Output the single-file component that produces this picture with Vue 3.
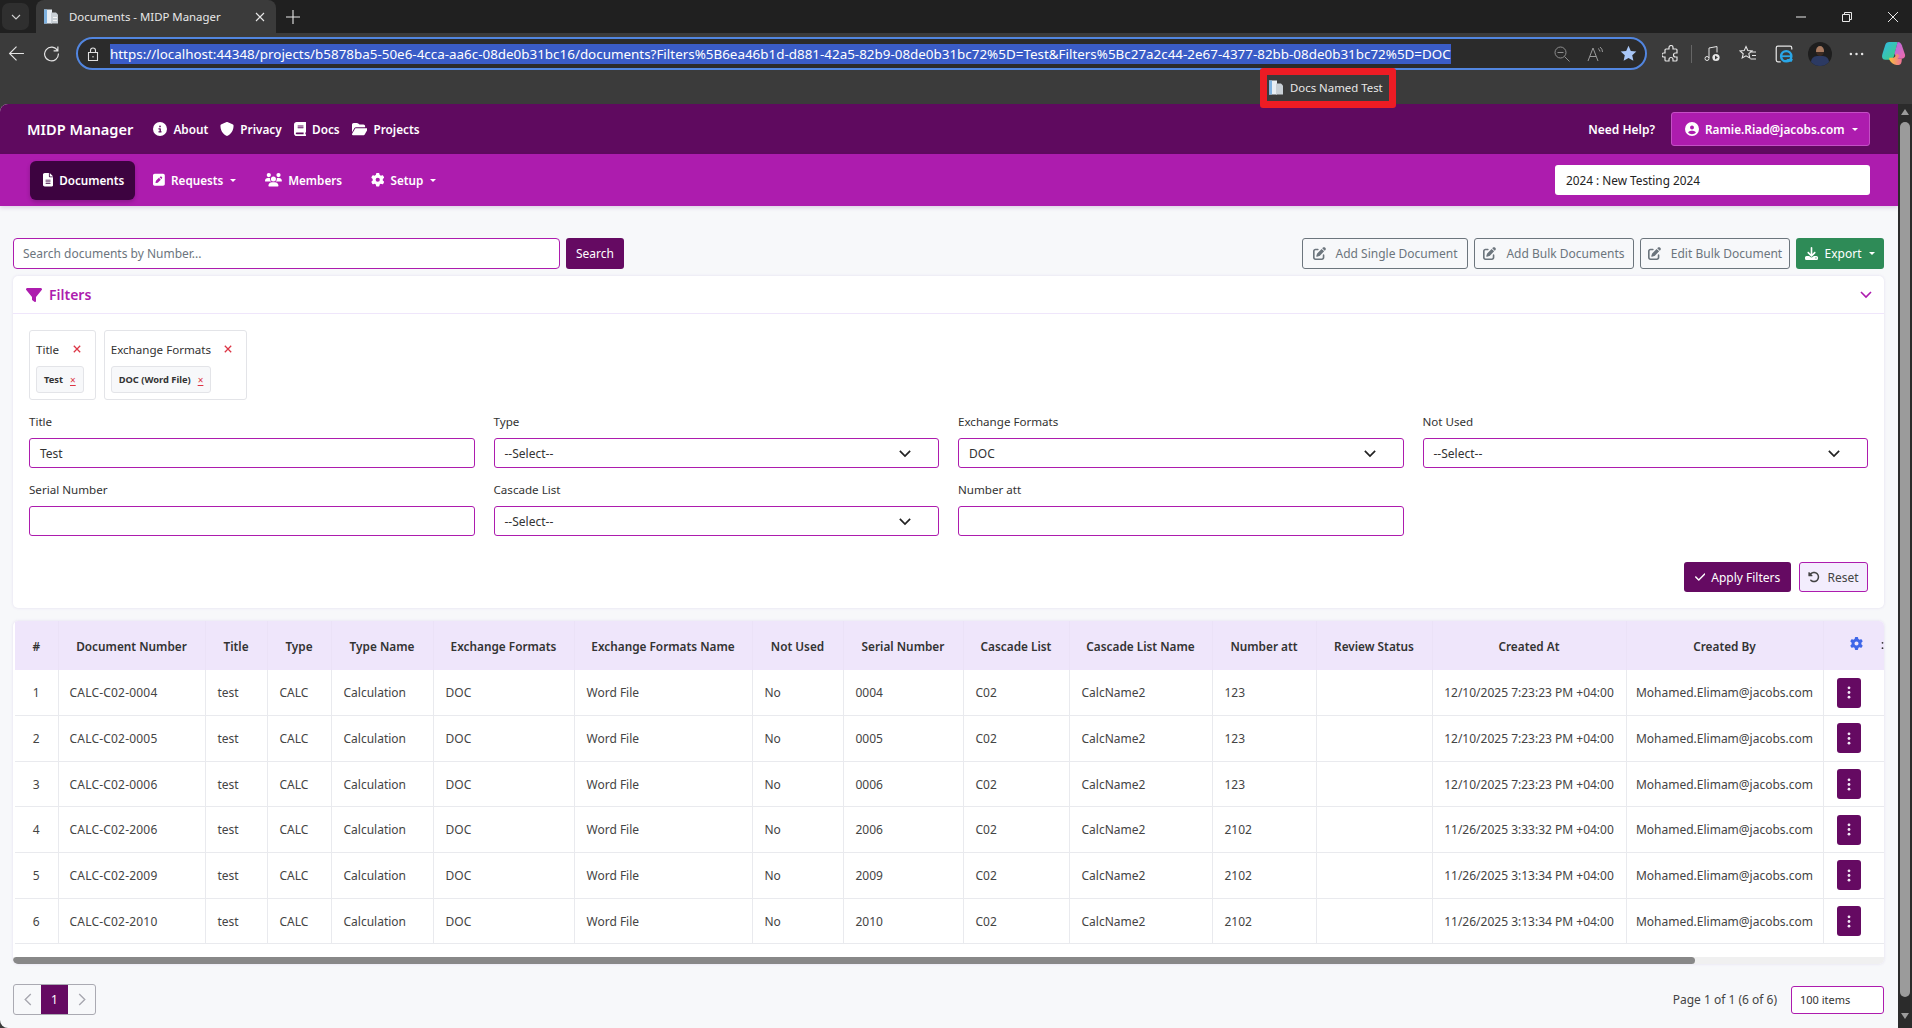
<script setup>
import { h } from 'vue'

const icons = {
  info: ['0 0 512 512', 'M256 512A256 256 0 1 0 256 0a256 256 0 1 0 0 512zM216 336h24V272H216c-13.3 0-24-10.7-24-24s10.7-24 24-24h48c13.3 0 24 10.7 24 24v88h8c13.3 0 24 10.7 24 24s-10.7 24-24 24H216c-13.3 0-24-10.7-24-24s10.7-24 24-24zm40-208a32 32 0 1 1 0 64 32 32 0 1 1 0-64z'],
  shield: ['0 0 512 512', 'M256 0c4.6 0 9.2 1 13.4 2.9L457.7 82.8c22 9.3 38.4 31 38.3 57.2c-.5 99.2-41.3 280.7-213.6 363.2c-16.7 8-36.1 8-52.8 0C57.3 420.7 16.5 239.2 16 140c-.1-26.2 16.3-47.9 38.3-57.2L242.7 2.9C246.8 1 251.4 0 256 0z'],
  book: ['0 0 448 512', 'M96 0C43 0 0 43 0 96V416c0 53 43 96 96 96H384h32c17.7 0 32-14.3 32-32s-14.3-32-32-32V384c17.7 0 32-14.3 32-32V32c0-17.7-14.3-32-32-32H384 96zm0 384H352v64H96c-17.7 0-32-14.3-32-32s14.3-32 32-32zm32-240c0-8.8 7.2-16 16-16H336c8.8 0 16 7.2 16 16s-7.2 16-16 16H144c-8.8 0-16-7.2-16-16zm16 48H336c8.8 0 16 7.2 16 16s-7.2 16-16 16H144c-8.8 0-16-7.2-16-16s7.2-16 16-16z'],
  folder: ['0 0 576 512', 'M88.7 223.8L0 375.8V96C0 60.7 28.7 32 64 32H181.5c17 0 33.3 6.7 45.3 18.7l26.5 26.5c12 12 28.3 18.7 45.3 18.7H416c35.3 0 64 28.7 64 64v32H144c-22.8 0-43.8 12.1-55.3 31.8zm27.6 16.1C122.1 230 132.6 224 144 224H544c11.5 0 22 6.1 27.7 16.1s5.7 22.2-.1 32.1l-112 192C453.9 474 443.4 480 432 480H32c-11.5 0-22-6.1-27.7-16.1s-5.7-22.2 .1-32.1l112-192z'],
  file: ['0 0 384 512', 'M64 0C28.7 0 0 28.7 0 64V448c0 35.3 28.7 64 64 64H320c35.3 0 64-28.7 64-64V160H256c-17.7 0-32-14.3-32-32V0H64zM256 0V128H384L256 0zM112 256H272c8.8 0 16 7.2 16 16s-7.2 16-16 16H112c-8.8 0-16-7.2-16-16s7.2-16 16-16zm0 64H272c8.8 0 16 7.2 16 16s-7.2 16-16 16H112c-8.8 0-16-7.2-16-16s7.2-16 16-16zm0 64H272c8.8 0 16 7.2 16 16s-7.2 16-16 16H112c-8.8 0-16-7.2-16-16s7.2-16 16-16z'],
  squarePen: ['0 0 448 512', 'M64 32C28.7 32 0 60.7 0 96V416c0 35.3 28.7 64 64 64H384c35.3 0 64-28.7 64-64V96c0-35.3-28.7-64-64-64H64zM325.8 139.7l14.4 14.4c15.6 15.6 15.6 40.9 0 56.6l-21.4 21.4-71-71 21.4-21.4c15.6-15.6 40.9-15.6 56.6 0zM119.9 289L225.1 183.8l71 71L190.9 359.9c-4.1 4.1-9.2 7-14.9 8.4l-60.1 15c-5.5 1.4-11.2-.2-15.2-4.2s-5.6-9.7-4.2-15.2l15-60.1c1.4-5.6 4.3-10.8 8.4-14.9z'],
  users: ['0 0 640 512', 'M144 0a80 80 0 1 1 0 160A80 80 0 1 1 144 0zM512 0a80 80 0 1 1 0 160A80 80 0 1 1 512 0zM0 298.7C0 239.8 47.8 192 106.7 192h42.7c15.9 0 31 3.5 44.6 9.7c-1.3 7.2-1.9 14.7-1.9 22.3c0 38.2 16.8 72.5 43.3 96c-.2 0-.4 0-.7 0H21.3C9.6 320 0 310.4 0 298.7zM405.3 320c-.2 0-.4 0-.7 0c26.6-23.5 43.3-57.8 43.3-96c0-7.6-.7-15-1.9-22.3c13.6-6.3 28.7-9.7 44.6-9.7h42.7C592.2 192 640 239.8 640 298.7c0 11.8-9.6 21.3-21.3 21.3H405.3zM224 224a96 96 0 1 1 192 0 96 96 0 1 1 -192 0zM128 485.3C128 411.7 187.7 352 261.3 352H378.7C452.3 352 512 411.7 512 485.3c0 14.7-11.9 26.7-26.7 26.7H154.7c-14.7 0-26.7-11.9-26.7-26.7z'],
  gear: ['0 0 512 512', 'M495.9 166.6c3.2 8.7 .5 18.4-6.4 24.6l-43.3 39.4c1.1 8.3 1.7 16.8 1.7 25.4s-.6 17.1-1.7 25.4l43.3 39.4c6.9 6.2 9.6 15.9 6.4 24.6c-4.4 11.9-9.7 23.3-15.8 34.3l-4.7 8.1c-6.6 11-14 21.4-22.1 31.2c-5.9 7.2-15.7 9.6-24.5 6.8l-55.7-17.7c-13.4 10.3-28.2 18.9-44 25.4l-12.5 57.1c-2 9.1-9 16.3-18.2 17.8c-13.8 2.3-28 3.5-42.5 3.5s-28.7-1.2-42.5-3.5c-9.2-1.5-16.2-8.7-18.2-17.8l-12.5-57.1c-15.8-6.5-30.6-15.1-44-25.4L83.1 425.9c-8.8 2.8-18.6 .3-24.5-6.8c-8.1-9.8-15.5-20.2-22.1-31.2l-4.7-8.1c-6.1-11-11.4-22.4-15.8-34.3c-3.2-8.7-.5-18.4 6.4-24.6l43.3-39.4C64.6 273.1 64 264.6 64 256s.6-17.1 1.7-25.4L22.4 191.2c-6.9-6.2-9.6-15.9-6.4-24.6c4.4-11.9 9.7-23.3 15.8-34.3l4.7-8.1c6.6-11 14-21.4 22.1-31.2c5.9-7.2 15.7-9.6 24.5-6.8l55.7 17.7c13.4-10.3 28.2-18.9 44-25.4l12.5-57.1c2-9.1 9-16.3 18.2-17.8C227.3 1.2 241.5 0 256 0s28.7 1.2 42.5 3.5c9.2 1.5 16.2 8.7 18.2 17.8l12.5 57.1c15.8 6.5 30.6 15.1 44 25.4l55.7-17.7c8.8-2.8 18.6-.3 24.5 6.8c8.1 9.8 15.5 20.2 22.1 31.2l4.7 8.1c6.1 11 11.4 22.4 15.8 34.3zM256 336a80 80 0 1 0 0-160 80 80 0 1 0 0 160z'],
  filter: ['0 0 512 512', 'M3.9 54.9C10.5 40.9 24.5 32 40 32H472c15.5 0 29.5 8.9 36.1 22.9s4.6 30.5-5.2 42.5L320 320.9V448c0 12.1-6.8 23.2-17.7 28.6s-23.8 4.3-33.5-3l-64-48c-8.1-6-12.8-15.5-12.8-25.6V320.9L9 97.3C-.7 85.4-2.8 68.8 3.9 54.9z'],
  user: ['0 0 512 512', 'M399 384.2C376.9 345.8 335.4 320 288 320H224c-47.4 0-88.9 25.8-111 64.2c35.2 39.2 86.2 63.8 143 63.8s107.8-24.7 143-63.8zM0 256a256 256 0 1 1 512 0A256 256 0 1 1 0 256zm256 16a72 72 0 1 0 0-144 72 72 0 1 0 0 144z'],
  edit: ['0 0 512 512', 'M471.6 21.7c-21.9-21.9-57.3-21.9-79.2 0L362.3 51.7l97.9 97.9 30.1-30.1c21.9-21.9 21.9-57.3 0-79.2L471.6 21.7zm-299.2 220c-6.1 6.1-10.8 13.6-13.5 21.9l-29.6 88.8c-2.9 8.6-.6 18.1 5.8 24.6s15.9 8.7 24.6 5.8l88.8-29.6c8.2-2.7 15.7-7.4 21.9-13.5L437.7 172.3 339.7 74.3 172.4 241.7zM96 64C43 64 0 107 0 160V416c0 53 43 96 96 96H352c53 0 96-43 96-96V320c0-17.7-14.3-32-32-32s-32 14.3-32 32v96c0 17.7-14.3 32-32 32H96c-17.7 0-32-14.3-32-32V160c0-17.7 14.3-32 32-32h96c17.7 0 32-14.3 32-32s-14.3-32-32-32H96z'],
  download: ['0 0 512 512', 'M288 32c0-17.7-14.3-32-32-32s-32 14.3-32 32V274.7l-73.4-73.4c-12.5-12.5-32.8-12.5-45.3 0s-12.5 32.8 0 45.3l128 128c12.5 12.5 32.8 12.5 45.3 0l128-128c12.5-12.5 12.5-32.8 0-45.3s-32.8-12.5-45.3 0L288 274.7V32zM64 352c-35.3 0-64 28.7-64 64v32c0 35.3 28.7 64 64 64H448c35.3 0 64-28.7 64-64V416c0-35.3-28.7-64-64-64H346.5l-45.3 45.3c-25 25-65.5 25-90.5 0L165.5 352H64zm368 56a24 24 0 1 1 0 48 24 24 0 1 1 0-48z'],
  check: ['0 0 448 512', 'M438.6 105.4c12.5 12.5 12.5 32.8 0 45.3l-256 256c-12.5 12.5-32.8 12.5-45.3 0l-128-128c-12.5-12.5-12.5-32.8 0-45.3s32.8-12.5 45.3 0L160 338.7 393.4 105.4c12.5-12.5 32.8-12.5 45.3 0z'],
  reset: ['0 0 512 512', 'M48.5 224H40c-13.3 0-24-10.7-24-24V72c0-9.7 5.8-18.5 14.8-22.2s19.3-1.7 26.2 5.2L98.6 96.6c87.6-86.5 228.7-86.2 315.8 1c87.5 87.5 87.5 229.3 0 316.8s-229.3 87.5-316.8 0c-12.5-12.5-12.5-32.8 0-45.3s32.8-12.5 45.3 0c62.5 62.5 163.8 62.5 226.3 0s62.5-163.8 0-226.3c-62.2-62.2-162.7-62.5-225.3-1L185 183c6.9 6.9 8.9 17.2 5.2 26.2s-12.5 14.8-22.2 14.8H48.5z']
}

// width follows the glyph's own viewBox, height is 1em
const Fa = (props) => {
  const [box, d] = icons[props.name]
  const w = Number(box.split(' ')[2])
  return h('svg', { viewBox: box, fill: 'currentColor', class: 'fa', style: { width: w / 512 + 'em' } }, [h('path', { d })])
}
Fa.props = ['name']

const url =
  'https://localhost:44348/projects/b5878ba5-50e6-4cca-aa6c-08de0b31bc16/documents?Filters%5B6ea46b1d-d881-42a5-82b9-08de0b31bc72%5D=Test&Filters%5Bc27a2c44-2e67-4377-82bb-08de0b31bc72%5D=DOC'

const columns = [
  { label: '#', width: 43 },
  { label: 'Document Number', width: 147 },
  { label: 'Title', width: 62 },
  { label: 'Type', width: 64 },
  { label: 'Type Name', width: 102 },
  { label: 'Exchange Formats', width: 141 },
  { label: 'Exchange Formats Name', width: 178 },
  { label: 'Not Used', width: 91 },
  { label: 'Serial Number', width: 120 },
  { label: 'Cascade List', width: 106 },
  { label: 'Cascade List Name', width: 143 },
  { label: 'Number att', width: 104 },
  { label: 'Review Status', width: 116 },
  { label: 'Created At', width: 194 },
  { label: 'Created By', width: 197 },
  { label: '', width: 61 }
]

const rows = [
  ['CALC-C02-0004', '0004', '123', '12/10/2025 7:23:23 PM +04:00'],
  ['CALC-C02-0005', '0005', '123', '12/10/2025 7:23:23 PM +04:00'],
  ['CALC-C02-0006', '0006', '123', '12/10/2025 7:23:23 PM +04:00'],
  ['CALC-C02-2006', '2006', '2102', '11/26/2025 3:33:32 PM +04:00'],
  ['CALC-C02-2009', '2009', '2102', '11/26/2025 3:13:34 PM +04:00'],
  ['CALC-C02-2010', '2010', '2102', '11/26/2025 3:13:34 PM +04:00']
]

const filterRows = [
  [
    { label: 'Title', value: 'Test' },
    { label: 'Type', value: '--Select--', select: true },
    { label: 'Exchange Formats', value: 'DOC', select: true },
    { label: 'Not Used', value: '--Select--', select: true }
  ],
  [
    { label: 'Serial Number', value: '' },
    { label: 'Cascade List', value: '--Select--', select: true },
    { label: 'Number att', value: '' }
  ]
]

const chips = [
  { label: 'Title', value: 'Test' },
  { label: 'Exchange Formats', value: 'DOC (Word File)' }
]
</script>

<template>
  <div class="window">
    <div class="tabstrip">
      <div class="tab-menu">
        <svg viewBox="0 0 12 12" width="12" height="12"><path d="M2 4l4 4 4-4" fill="none" stroke="#d0d0d0" stroke-width="1.1" /></svg>
      </div>
      <div class="tab">
        <svg class="favicon" viewBox="0 0 16 16">
          <path d="M1 1h8v14H1z" fill="#e8eef4" />
          <path d="M1 1h3v14H1z" fill="#7fb2e0" />
          <path d="M8 4h5l2 2v9H8z" fill="#c9d0d6" />
          <path d="M10 9h4M10 12h4" stroke="#f5f5f5" stroke-width="1" />
        </svg>
        <span class="tab-title">Documents - MIDP Manager</span>
        <svg class="tab-close" viewBox="0 0 10 10" width="10" height="10"><path d="M1 1l8 8M9 1l-8 8" stroke="#e8e8e8" stroke-width="1.1" /></svg>
      </div>
      <svg class="new-tab" viewBox="0 0 14 14" width="14" height="14"><path d="M7 0v14M0 7h14" stroke="#e8e8e8" stroke-width="1.1" /></svg>
      <div class="window-controls">
        <svg viewBox="0 0 10 10" width="10" height="10"><path d="M0 5h10" stroke="#e8e8e8" /></svg>
        <svg viewBox="0 0 10 10" width="10" height="10"><path d="M.5 2.5h7v7h-7zM2.5 2.5V.5h7v7h-2" fill="none" stroke="#e8e8e8" /></svg>
        <svg viewBox="0 0 10 10" width="10" height="10"><path d="M0 0l10 10M10 0L0 10" stroke="#e8e8e8" /></svg>
      </div>
    </div>

    <div class="toolbar">
      <div class="nav-icon">
        <svg viewBox="0 0 16 16" width="17" height="17"><path d="M15 8H1.5M8 1.5L1.5 8 8 14.5" fill="none" stroke="#e6e6e6" stroke-width="1.1" /></svg>
      </div>
      <div class="nav-icon">
        <svg viewBox="0 0 16 16" width="17" height="17"><path d="M13.8 5.5A6.5 6.5 0 1 0 14.5 8M14 1.5v4h-4" fill="none" stroke="#e6e6e6" stroke-width="1.1" /></svg>
      </div>
      <div class="omnibox">
        <svg class="lock" viewBox="0 0 14 14" width="14" height="14"><path d="M2.5 5.5h9v8h-9zM4.5 5.5V3.5a2.5 2.5 0 0 1 5 0v2M7 9v1.5" fill="none" stroke="#e0e0e0" stroke-width="1.1" /></svg>
        <span class="url">{{ url }}</span>
        <svg class="omni-icon first" viewBox="0 0 16 16" width="16" height="16"><path d="M6.5 1a5.5 5.5 0 1 0 0 11 5.5 5.5 0 0 0 0-11zM3.5 6.5h6M10.5 10.5l5 5" fill="none" stroke="#8e8e8e" /></svg>
        <svg class="omni-icon" viewBox="0 0 16 16" width="16" height="16"><path d="M1 15L6 2l5 13M3 10.5h6M11 2.5a4 4 0 0 1 2 3M13 1a6 6 0 0 1 2.5 5" fill="none" stroke="#9a9a9a" /></svg>
        <svg class="omni-icon" viewBox="0 0 16 16" width="17" height="17"><path d="M8 .8l2.2 4.8 5.2.6-3.9 3.5 1.1 5.2L8 12.3l-4.6 2.6 1.1-5.2L.6 6.2l5.2-.6z" fill="#a9c7f7" /></svg>
      </div>
      <div class="tool"><svg viewBox="0 0 18 18" width="18" height="18"><path d="M7 2.5a2 2 0 0 1 4 0V4h3a1 1 0 0 1 1 1v3h-1.5a2 2 0 0 0 0 4H15v3a1 1 0 0 1-1 1h-3v-1.5a2 2 0 0 0-4 0V16H4a1 1 0 0 1-1-1v-3H1.8a2 2 0 0 1 0-4H3V5a1 1 0 0 1 1-1h3z" fill="none" stroke="#e6e6e6" stroke-width="1.2" /></svg></div>
      <div class="tool-divider"></div>
      <div class="tool"><svg viewBox="0 0 18 18" width="18" height="18"><path d="M6 13V3l8-1.5v6" fill="none" stroke="#e6e6e6" /><circle cx="4" cy="13.5" r="2" fill="none" stroke="#e6e6e6" /><circle cx="13" cy="12.5" r="3.6" fill="#e6e6e6" /><path d="M12 10.5l3 2-3 2z" fill="#3b3b3b" /></svg></div>
      <div class="tool"><svg viewBox="0 0 18 18" width="18" height="18"><path d="M7 1.5l1.8 4 4.2.4-3.2 2.8 1 4.2L7 10.8 3.2 13l1-4.2L1 6l4.2-.4zM11 7h6M13 10.5h4M11.5 14H17" fill="none" stroke="#e6e6e6" stroke-width="1.1" /></svg></div>
      <div class="tool"><svg viewBox="0 0 18 18" width="20" height="20"><path d="M6 16H3.5A1.5 1.5 0 0 1 2 14.5v-11A1.5 1.5 0 0 1 3.5 2h11A1.5 1.5 0 0 1 16 3.5V5" fill="none" stroke="#e6e6e6" stroke-width="1.1" /><circle cx="11" cy="11" r="4.6" fill="none" stroke="#2aa7e8" stroke-width="2.2" /><path d="M6.5 11h9" stroke="#2aa7e8" stroke-width="1.6" /><path d="M12 13.5h5l-1 2.5H9z" fill="#2aa7e8" /></svg></div>
      <div class="tool"><span class="avatar"><span class="avatar-body"></span><span class="avatar-head"></span></span></div>
      <div class="tool"><svg viewBox="0 0 16 4" width="15" height="4"><circle cx="2" cy="2" r="1.3" fill="#e6e6e6" /><circle cx="8" cy="2" r="1.3" fill="#e6e6e6" /><circle cx="14" cy="2" r="1.3" fill="#e6e6e6" /></svg></div>
      <div class="tool copilot-slot">
        <svg viewBox="0 0 24 24" width="25" height="25">
          <defs>
            <linearGradient id="cop-a" x1="0" y1="0" x2="1" y2="1"><stop offset="0" stop-color="#31b8e8" /><stop offset="1" stop-color="#3fd07a" /></linearGradient>
            <linearGradient id="cop-b" x1="0" y1="0" x2="1" y2="1"><stop offset="0" stop-color="#b06ae8" /><stop offset="1" stop-color="#f06aa8" /></linearGradient>
            <linearGradient id="cop-c" x1="0" y1="0" x2="1" y2="0"><stop offset="0" stop-color="#f7c23a" /><stop offset="1" stop-color="#f0709a" /></linearGradient>
          </defs>
          <path d="M8 1h8l-3 12c-1 3-2 5-5 5H4C1 18 .5 15 1.5 12L4 4c.6-2 2-3 4-3z" fill="url(#cop-a)" />
          <path d="M16 1c2 0 3 1 4 3l3 9c.6 2-.5 4-3 4h-5l-2-5z" fill="url(#cop-b)" />
          <path d="M8 18h6c2 0 3-2 4-4l-3-2c-1 3-2 4-3.5 4H8z M8 18c2 3 4 5 7 5h2c2 0 3-2 3-6h-5c-2 0-3 1-7 1z" fill="url(#cop-c)" />
        </svg>
      </div>
    </div>

    <div class="bookmarks">
      <div class="bookmark">
        <svg class="favicon" viewBox="0 0 16 16">
          <path d="M1 1h8v14H1z" fill="#e8eef4" />
          <path d="M1 1h3v14H1z" fill="#7fb2e0" />
          <path d="M8 4h5l2 2v9H8z" fill="#c9d0d6" />
        </svg>
        <span>Docs Named Test</span>
      </div>
    </div>

    <div class="viewport">
      <div class="page">
        <header class="topnav">
          <span class="brand">MIDP Manager</span>
          <a class="topnav-link"><Fa name="info" />About</a>
          <a class="topnav-link"><Fa name="shield" />Privacy</a>
          <a class="topnav-link"><Fa name="book" />Docs</a>
          <a class="topnav-link"><Fa name="folder" />Projects</a>
          <span class="need-help">Need Help?</span>
          <button class="user-btn"><Fa name="user" />Ramie.Riad@jacobs.com<i class="caret"></i></button>
        </header>

        <nav class="subnav">
          <a class="subnav-link active"><Fa name="file" />Documents</a>
          <a class="subnav-link"><Fa name="squarePen" />Requests<i class="caret"></i></a>
          <a class="subnav-link"><Fa name="users" />Members</a>
          <a class="subnav-link"><Fa name="gear" />Setup<i class="caret"></i></a>
          <div class="project-select">2024 : New Testing 2024</div>
        </nav>

        <main class="content">
          <div class="actions">
            <input class="search-input" placeholder="Search documents by Number..." />
            <button class="btn btn-dark search-btn">Search</button>
            <span class="spacer"></span>
            <button class="btn btn-outline add-single"><Fa name="edit" />Add Single Document</button>
            <button class="btn btn-outline add-bulk"><Fa name="edit" />Add Bulk Documents</button>
            <button class="btn btn-outline edit-bulk"><Fa name="edit" />Edit Bulk Document</button>
            <button class="btn btn-green"><Fa name="download" />Export<i class="caret"></i></button>
          </div>

          <section class="filters">
            <div class="filters-head">
              <Fa name="filter" />
              <span>Filters</span>
              <svg class="head-chevron" viewBox="0 0 12 8" width="12" height="8"><path d="M1 1l5 5 5-5" fill="none" stroke="#ad1cae" stroke-width="1.6" /></svg>
            </div>
            <div class="filters-body">
              <div class="chips">
                <div v-for="chip in chips" :key="chip.label" class="chip-group">
                  <div class="chip-title">
                    <span>{{ chip.label }}</span>
                    <svg viewBox="0 0 10 10" width="8" height="8"><path d="M1 1l8 8M9 1l-8 8" stroke="#dc3545" stroke-width="1.6" /></svg>
                  </div>
                  <div class="chip-value">
                    {{ chip.value }}
                    <span class="chip-x">×</span>
                  </div>
                </div>
              </div>
              <div v-for="(row, i) in filterRows" :key="i" class="field-row">
                <div v-for="field in row" :key="field.label" class="field">
                  <label>{{ field.label }}</label>
                  <div class="control">
                    <span>{{ field.value }}</span>
                    <svg v-if="field.select" viewBox="0 0 14 10" width="12" height="9"><path d="M1 2l6 6 6-6" fill="none" stroke="#222" stroke-width="2" /></svg>
                  </div>
                </div>
              </div>
              <div class="filter-actions">
                <button class="btn btn-dark apply-btn"><Fa name="check" />Apply Filters</button>
                <button class="btn reset-btn"><Fa name="reset" />Reset</button>
              </div>
            </div>
          </section>

          <section class="table-card">
            <table class="docs">
              <colgroup>
                <col v-for="col in columns" :key="col.label" :style="{ width: col.width + 'px' }" />
              </colgroup>
              <thead>
                <tr>
                  <th v-for="col in columns.slice(0, -1)" :key="col.label">{{ col.label }}</th>
                  <th class="th-actions">
                    <div class="th-actions-inner">
                      <Fa name="gear" />
                      <svg viewBox="0 0 3 10" width="3" height="9"><circle cx="1.5" cy="2" r="1" fill="#333" /><circle cx="1.5" cy="8" r="1" fill="#333" /></svg>
                    </div>
                  </th>
                </tr>
              </thead>
              <tbody>
                <tr v-for="(row, i) in rows" :key="row[0]">
                  <td class="num">{{ i + 1 }}</td>
                  <td class="doc-number">{{ row[0] }}</td>
                  <td>test</td>
                  <td>CALC</td>
                  <td>Calculation</td>
                  <td>DOC</td>
                  <td>Word File</td>
                  <td>No</td>
                  <td>{{ row[1] }}</td>
                  <td>C02</td>
                  <td>CalcName2</td>
                  <td>{{ row[2] }}</td>
                  <td></td>
                  <td class="center">{{ row[3] }}</td>
                  <td class="center">Mohamed.Elimam@jacobs.com</td>
                  <td class="td-actions">
                    <button class="kebab">
                      <svg viewBox="0 0 4 14" width="4" height="13"><circle cx="2" cy="2" r="1.5" /><circle cx="2" cy="7" r="1.5" /><circle cx="2" cy="12" r="1.5" /></svg>
                    </button>
                  </td>
                </tr>
              </tbody>
            </table>
            <div class="h-scroll"><div class="h-thumb"></div></div>
          </section>

          <footer class="pager-row">
            <div class="pager">
              <span class="pager-btn">
                <svg viewBox="0 0 8 14" width="8" height="13"><path d="M7 1L1 7l6 6" fill="none" stroke="#a8a8b0" stroke-width="1.5" /></svg>
              </span>
              <span class="pager-btn current">1</span>
              <span class="pager-btn">
                <svg viewBox="0 0 8 14" width="8" height="13"><path d="M1 1l6 6-6 6" fill="none" stroke="#a8a8b0" stroke-width="1.5" /></svg>
              </span>
            </div>
            <span class="spacer"></span>
            <span class="page-info">Page 1 of 1 (6 of 6)</span>
            <div class="page-size">100 items</div>
          </footer>
        </main>
      </div>

      <div class="v-scroll">
        <i class="arrow-up"></i>
        <div class="v-thumb"></div>
        <i class="arrow-down"></i>
      </div>
    </div>

    <div class="annotation"></div>
  </div>
</template>

<style>
html,
body {
  margin: 0;
  overflow: hidden;
  background: #3b3b3b;
}
</style>

<style scoped>
.window {
  position: relative;
  width: 1912px;
  height: 1028px;
  display: flex;
  flex-direction: column;
  overflow: hidden;
  background: #3b3b3b;
  font-family: 'Noto Sans', 'Open Sans', sans-serif;
  font-size: 12px;
  color: #333;
}

.fa {
  height: 1em;
  flex: none;
}

/* browser chrome */
.tabstrip {
  height: 33px;
  flex: none;
  display: flex;
  align-items: center;
  background: #202020;
}

.tab-menu {
  width: 27px;
  height: 27px;
  margin-left: 2px;
  border-radius: 7px;
  background: #2f2f2f;
  display: flex;
  align-items: center;
  justify-content: center;
}

.tab {
  width: 240px;
  height: 33px;
  margin-left: 7px;
  padding-left: 7px;
  box-sizing: border-box;
  border-radius: 8px 8px 0 0;
  background: #3b3b3b;
  display: flex;
  align-items: center;
  color: #e8e8e8;
  font-size: 11.4px;
}

.favicon {
  width: 16px;
  height: 17px;
  flex: none;
}

.tab-title {
  margin-left: 10px;
  white-space: nowrap;
}

.tab-close {
  margin-left: auto;
  margin-right: 11px;
}

.new-tab {
  margin-left: 10px;
}

.window-controls {
  margin-left: auto;
  display: flex;
  align-items: center;
  gap: 36px;
  margin-right: 14px;
}

.toolbar {
  height: 37px;
  flex: none;
  box-sizing: border-box;
  padding-top: 4px;
  display: flex;
  align-items: center;
}

.nav-icon {
  width: 32px;
  margin-right: 3px;
  display: flex;
  justify-content: center;
}

.omnibox {
  width: 1571px;
  height: 33px;
  margin-left: 6px;
  margin-right: 6px;
  box-sizing: border-box;
  border: 2px solid #5286e0;
  border-radius: 17px;
  background: #2b2b2b;
  display: flex;
  align-items: center;
  padding-left: 8px;
  padding-right: 8px;
  color: #fff;
}

.lock {
  flex: none;
}

.url {
  margin-left: 10px;
  background: #3a5cc7;
  color: #fff;
  white-space: nowrap;
  font-size: 13.42px;
  line-height: 20px;
}

.omni-icon {
  flex: none;
  margin-left: 17px;
}

.omni-icon.first {
  margin-left: auto;
}

.tool {
  width: 36px;
  display: flex;
  justify-content: center;
  align-items: center;
}

.tool-divider {
  width: 1px;
  height: 18px;
  background: #666;
  margin: 0 2px;
}

.copilot-slot {
  margin-left: 1px;
}

.avatar {
  width: 24px;
  height: 24px;
  border-radius: 50%;
  background: #1e1e1e;
  overflow: hidden;
  position: relative;
  display: block;
}

.avatar-head {
  position: absolute;
  left: 8px;
  top: 4px;
  width: 8px;
  height: 10px;
  border-radius: 50%;
  background: linear-gradient(#a87a60 60%, #3a2a22 60%);
}

.avatar-body {
  position: absolute;
  left: 3px;
  top: 14px;
  width: 18px;
  height: 12px;
  border-radius: 6px 6px 0 0;
  background: #2c3a63;
}

.bookmarks {
  height: 34px;
  flex: none;
  position: relative;
  display: flex;
  align-items: center;
  padding-left: 1268px;
}

.bookmark {
  display: flex;
  align-items: center;
  gap: 6px;
  color: #e8e8e8;
  font-size: 11.4px;
  position: relative;
  z-index: 3;
}

.annotation {
  position: absolute;
  left: 1260px;
  top: 68px;
  width: 136px;
  height: 40px;
  box-sizing: border-box;
  border: 7px solid #ed1c24;
  border-radius: 3px;
  z-index: 2;
}

.viewport {
  flex: 1;
  min-height: 0;
  display: flex;
}

.page {
  flex: 1;
  min-width: 0;
  display: flex;
  flex-direction: column;
  background: #f7f8fa;
  border-radius: 8px 0 0 8px;
  overflow: hidden;
}

.v-scroll {
  width: 14px;
  flex: none;
  background: #2b2b2b;
  display: flex;
  flex-direction: column;
  align-items: center;
  padding-top: 5px;
  box-sizing: border-box;
}

.arrow-up {
  width: 0;
  height: 0;
  border-left: 4px solid transparent;
  border-right: 4px solid transparent;
  border-bottom: 6px solid #9b9b9b;
}

.arrow-down {
  width: 0;
  height: 0;
  margin-top: 16px;
  border-left: 4px solid transparent;
  border-right: 4px solid transparent;
  border-top: 6px solid #9b9b9b;
}

.v-thumb {
  width: 10px;
  height: 875px;
  margin-top: 7px;
  border-radius: 5px;
  background: #9b9b9b;
}

/* app nav */
.topnav {
  height: 50px;
  flex: none;
  padding: 0 28px 0 27px;
  display: flex;
  align-items: center;
  background: #5f0a5f;
  color: #fff;
}

.brand {
  font-size: 14.6px;
  font-weight: 600;
  margin-right: 20px;
}

.topnav-link {
  display: flex;
  align-items: center;
  gap: 6px;
  font-weight: 600;
  font-size: 11.8px;
  margin-right: 12px;
}

.topnav-link .fa {
  font-size: 14px;
}

.need-help {
  margin-left: auto;
  font-weight: 600;
  font-size: 12px;
}

.user-btn {
  width: 199px;
  height: 34px;
  margin-left: 16px;
  padding: 0 0 0 13px;
  box-sizing: border-box;
  border: 1px solid #c44fc5;
  border-radius: 3px;
  background: #ad1cae;
  color: #fff;
  font: 600 11.8px 'Noto Sans', sans-serif;
  display: flex;
  align-items: center;
  gap: 6px;
}

.user-btn .fa {
  font-size: 14px;
}

.caret {
  width: 0;
  height: 0;
  margin-left: 1px;
  border-left: 3px solid transparent;
  border-right: 3px solid transparent;
  border-top: 3px solid currentColor;
}

.subnav {
  height: 52px;
  flex: none;
  box-sizing: border-box;
  padding: 0 28px 0 30px;
  display: flex;
  align-items: center;
  background: #ad1cae;
  color: #fff;
  box-shadow: 0 2px 4px rgba(80, 0, 120, 0.15);
  position: relative;
}

.subnav-link {
  height: 39px;
  padding: 0 13px;
  margin-right: 3px;
  border-radius: 6px;
  display: flex;
  align-items: center;
  gap: 6px;
  font-weight: 600;
  font-size: 11.7px;
}

.subnav-link.active {
  padding-right: 11px;
  margin-right: 5px;
  background: #3d0340;
  box-shadow: 0 2px 4px rgba(0, 0, 0, 0.2);
}

.subnav-link .fa {
  font-size: 13.5px;
}

.project-select {
  width: 315px;
  height: 30px;
  margin-left: auto;
  padding-left: 11px;
  box-sizing: border-box;
  border-radius: 3px;
  background: #fff;
  color: #222;
  font-size: 11.8px;
  line-height: 30px;
}

/* main */
.content {
  flex: 1;
  min-height: 0;
  padding: 32px 14px 0 13px;
  display: flex;
  flex-direction: column;
}

.actions {
  display: flex;
  align-items: stretch;
  height: 31px;
  margin-bottom: 7px;
}

.search-input {
  width: 547px;
  box-sizing: border-box;
  border: 1px solid #ad1cae;
  border-radius: 4px;
  padding: 0 9px;
  font: 12px 'Noto Sans', sans-serif;
  background: #fff;
  outline: none;
}

.search-input::placeholder {
  color: #6c757d;
  opacity: 1;
}

.btn {
  height: 31px;
  box-sizing: border-box;
  border-radius: 3px;
  border: 1px solid transparent;
  font: 12px 'Noto Sans', sans-serif;
  display: flex;
  align-items: center;
  justify-content: center;
  gap: 7px;
  padding: 0;
}

.search-btn {
  width: 58px;
  margin-left: 6px;
}

.btn-dark {
  background: #650a62;
  color: #fff;
}

.spacer {
  flex: 1;
}

.btn-outline {
  background: transparent;
  border-color: #6c757d;
  color: #6c757d;
  margin-right: 6px;
}

.btn-outline .fa {
  font-size: 13px;
  margin-right: 3px;
}

.add-single {
  width: 166px;
}

.add-bulk {
  width: 160px;
}

.edit-bulk {
  width: 150px;
}

.btn-green {
  width: 88px;
  background: #2e8b57;
  color: #fff;
}

.btn-green .fa {
  font-size: 13px;
}

.filters {
  height: 332px;
  flex: none;
  box-sizing: border-box;
  background: #fff;
  border-radius: 5px;
  box-shadow: 0 0 3px rgba(120, 80, 180, 0.16);
  display: flex;
  flex-direction: column;
}

.filters-head {
  height: 38px;
  flex: none;
  box-sizing: border-box;
  border-bottom: 1px solid #efe6fb;
  padding-left: 13px;
  padding-right: 12px;
  display: flex;
  align-items: center;
  gap: 7px;
  color: #ad1cae;
  font-size: 14px;
  font-weight: 600;
}

.filters-head .fa {
  font-size: 16px;
}

.head-chevron {
  margin-left: auto;
}

.filters-body {
  padding: 16px 16px 0;
}

.chips {
  display: flex;
  gap: 8px;
}

.chip-group {
  height: 70px;
  box-sizing: border-box;
  border: 1px solid #e3e4e8;
  border-radius: 3px;
  padding: 0 14px 0 6px;
}

.chip-title {
  height: 35px;
  padding-top: 1px;
  box-sizing: border-box;
  display: flex;
  align-items: center;
  gap: 13px;
  font-size: 11.6px;
  color: #333;
}

.chip-title svg {
  margin-left: auto;
}

.chip-value {
  display: inline-flex;
  align-items: center;
  height: 27px;
  box-sizing: border-box;
  padding: 0 7px;
  gap: 7px;
  margin-right: -3px;
  border: 1px solid #e3e4e8;
  border-radius: 3px;
  background: #f7f8fa;
  font-size: 9.3px;
  font-weight: 700;
  color: #333;
}

.chip-x {
  color: #dc3545;
  font-weight: 400;
  font-size: 10px;
  line-height: 10px;
  text-decoration: underline;
}

.field-row {
  display: grid;
  grid-template-columns: repeat(4, 1fr);
  gap: 19px;
  margin-top: 13px;
}

.field label {
  display: block;
  height: 18px;
  line-height: 18px;
  font-size: 11.6px;
  color: #333;
  margin-bottom: 7px;
}

.control {
  height: 30px;
  box-sizing: border-box;
  border: 1px solid #ad1cae;
  border-radius: 3px;
  padding: 0 10px;
  display: flex;
  align-items: center;
  justify-content: space-between;
  color: #333;
  background: #fff;
}

.control svg {
  margin-right: 17px;
}

.filter-actions {
  display: flex;
  justify-content: flex-end;
  gap: 8px;
  margin-top: 26px;
}

.apply-btn {
  width: 107px;
  height: 30px;
  gap: 6px;
}

.apply-btn .fa {
  font-size: 12px;
}

.reset-btn {
  width: 69px;
  height: 30px;
  background: #f3edfd;
  border-color: #ad1cae;
  color: #444;
}

.reset-btn .fa {
  font-size: 12px;
}

.table-card {
  height: 343px;
  flex: none;
  margin-top: 13px;
  padding-left: 2px;
  box-sizing: border-box;
  background: #fff;
  border-radius: 5px;
  box-shadow: 0 0 3px rgba(120, 80, 180, 0.16);
  overflow: hidden;
  position: relative;
}

.docs {
  width: 1869px;
  table-layout: fixed;
  border-collapse: collapse;
}

.docs th {
  height: 49px;
  box-sizing: border-box;
  padding: 0;
  background: #efe6fb;
  border-right: 1px solid #ebe2f7;
  font-weight: 600;
  font-size: 11.8px;
  color: #333;
  text-align: center;
}

.docs td {
  height: 45.67px;
  box-sizing: border-box;
  padding: 0 0 0 12px;
  border-right: 1px solid #e9eaee;
  border-bottom: 1px solid #e9eaee;
  color: #444;
  white-space: nowrap;
}

.docs td.doc-number {
  padding-left: 11px;
  letter-spacing: 0.2px;
}

.docs td.num {
  padding: 0;
  text-align: center;
}

.docs td.center {
  padding: 0;
  text-align: center;
}

.th-actions {
  border-right: 0;
}

.th-actions-inner {
  display: flex;
  align-items: center;
  padding-left: 26px;
  color: #3f67e8;
}

.th-actions-inner .fa {
  font-size: 13px;
  margin-top: -4px;
  margin-right: 18px;
}

.docs td.td-actions {
  border-right: 0;
  padding: 0 0 0 13px;
}

.kebab {
  width: 24px;
  height: 30px;
  padding: 0;
  border: 0;
  border-radius: 3px;
  background: #650a62;
  color: #f2e9f5;
  display: flex;
  align-items: center;
  justify-content: center;
}

.kebab circle {
  fill: #f2e9f5;
}

.h-scroll {
  position: absolute;
  left: 0;
  right: 0;
  bottom: 0;
  height: 7px;
  background: #f0f0f0;
}

.h-thumb {
  width: 1682px;
  height: 7px;
  border-radius: 3.5px;
  background: #888;
}

.pager-row {
  margin-top: 20px;
  display: flex;
  align-items: center;
  height: 31px;
}

.pager {
  height: 31px;
  box-sizing: border-box;
  border: 1px solid #aaaab2;
  border-radius: 3px;
  display: flex;
  overflow: hidden;
}

.pager-btn {
  width: 27px;
  display: flex;
  align-items: center;
  justify-content: center;
}

.pager-btn.current {
  background: #650a62;
  color: #fff;
}

.page-info {
  color: #444;
  margin-right: 14px;
}

.page-size {
  width: 93px;
  height: 28px;
  box-sizing: border-box;
  border: 1px solid #ad1cae;
  border-radius: 3px;
  background: #fff;
  padding-left: 8px;
  line-height: 26px;
  font-size: 11px;
  color: #333;
}
</style>
